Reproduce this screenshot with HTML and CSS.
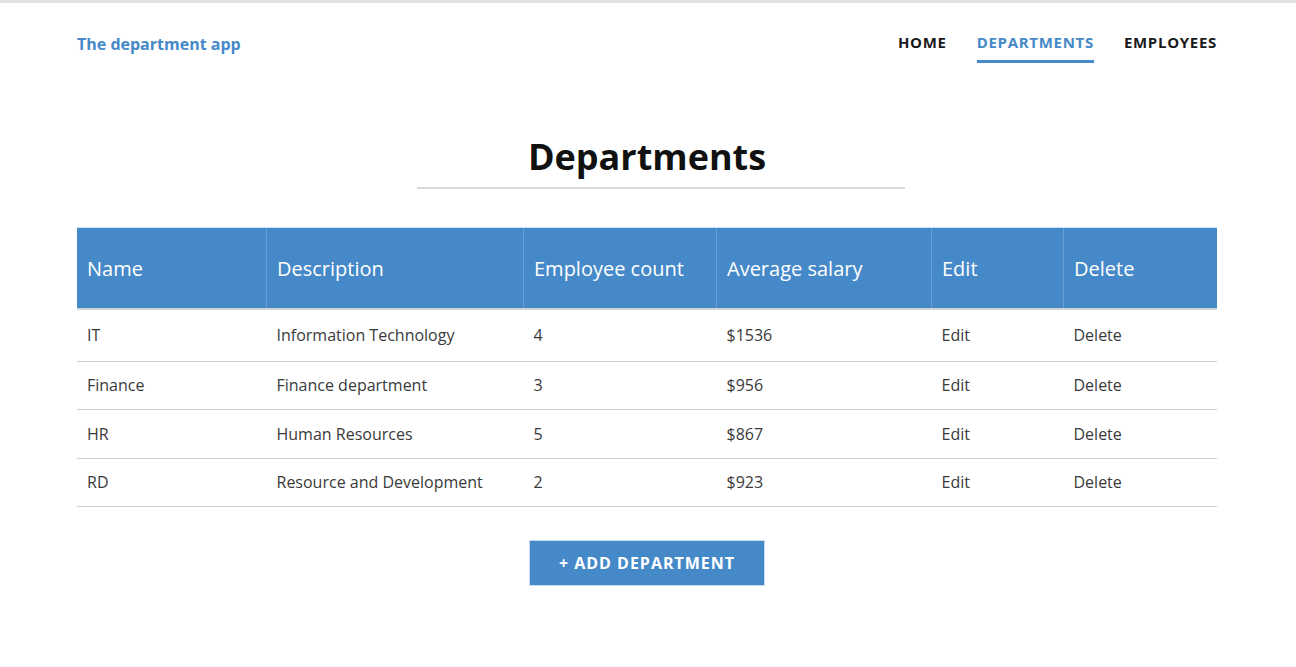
FILE: index.html
```html
<!DOCTYPE html>
<html lang="en">
<head>
<meta charset="utf-8">
<title>The department app</title>
<link rel="stylesheet" href="styles.css">
</head>
<body>
<div class="topbar"></div>
<div class="container">
  <header class="header">
    <a class="brand" href="#">The department app</a>
    <nav class="nav">
      <a class="nav-link" href="#">HOME</a>
      <a class="nav-link active" href="#">DEPARTMENTS</a>
      <a class="nav-link" href="#">EMPLOYEES</a>
    </nav>
  </header>
  <main>
    <h1 class="title">Departments</h1>
    <div class="title-rule"></div>
    <table class="table">
      <thead>
        <tr>
          <th class="c-name">Name</th>
          <th class="c-desc">Description</th>
          <th class="c-count">Employee count</th>
          <th class="c-sal">Average salary</th>
          <th class="c-edit">Edit</th>
          <th class="c-del">Delete</th>
        </tr>
      </thead>
      <tbody>
        <tr class="first"><td>IT</td><td>Information Technology</td><td>4</td><td>$1536</td><td>Edit</td><td>Delete</td></tr>
        <tr class="short"><td>Finance</td><td>Finance department</td><td>3</td><td>$956</td><td>Edit</td><td>Delete</td></tr>
        <tr><td>HR</td><td>Human Resources</td><td>5</td><td>$867</td><td>Edit</td><td>Delete</td></tr>
        <tr class="short"><td>RD</td><td>Resource and Development</td><td>2</td><td>$923</td><td>Edit</td><td>Delete</td></tr>
      </tbody>
    </table>
    <div class="actions">
      <button class="btn">+ ADD DEPARTMENT</button>
    </div>
  </main>
</div>
</body>
</html>
```
FILE: styles.css
```css
html, body {
  margin: 0;
  padding: 0;
  background: #fff;
  font-family: "Open Sans", "Noto Sans", sans-serif;
  color: #333;
}
.topbar {
  height: 3px;
  background: #e2e2e2;
}
.container {
  width: 1140px;
  margin-left: calc(50% - 571px);
}
.header {
  display: flex;
  justify-content: space-between;
  align-items: flex-start;
  height: 60px;
  padding-top: 30px;
}
.brand {
  color: #4689c8;
  font-weight: 700;
  font-size: 16px;
  line-height: 22px;
  text-decoration: none;
}
.nav {
  display: flex;
  gap: 30px;
}
.nav-link {
  color: #1a1a1a;
  font-weight: 700;
  font-size: 15px;
  line-height: 20px;
  letter-spacing: 0.7px;
  text-decoration: none;
  padding-bottom: 8px;
  border-bottom: 3px solid transparent;
  margin-top: -1px;
}
.nav-link.active {
  color: #4689c8;
  border-bottom-color: #4689c8;
}
.title {
  margin: 39px 0 0;
  text-align: center;
  font-size: 36px;
  line-height: 50px;
  font-weight: 700;
  color: #111;
}
.title-rule {
  width: 488px;
  margin: 5px 0 0 340px;
  height: 2px;
  background: #d9d9d9;
}
.table {
  width: 100%;
  margin-top: 38px;
  border-collapse: collapse;
  font-size: 16px;
}
.table th {
  background: #4689c8;
  color: #fff;
  font-weight: 400;
  font-size: 20px;
  text-align: left;
  height: 80px;
  padding: 0 10px;
  border-top: 1px solid #cfe0f0;
  border-left: 1px solid #6a9fd3;
  border-bottom: 2px solid #cfd4d9;
}
.table th:first-child { border-left: none; }
.table td {
  padding: 0 10px;
  height: 48px;
  line-height: 21px;
  color: #3a3a3a;
  border-bottom: 1px solid #cfcfcf;
}
.table tr.first td { height: 51px; }
.table tr.short td { height: 47px; }
.c-name { width: 169px; }
.c-desc { width: 236px; }
.c-count { width: 172px; }
.c-sal { width: 194px; }
.c-edit { width: 111px; }
.actions {
  display: flex;
  justify-content: center;
  margin-top: 33px;
}
.btn {
  width: 236px;
  height: 46px;
  background: #4689c8;
  color: #fff;
  border: 1px solid #c8dcef;
  font-family: "Open Sans", "Noto Sans", sans-serif;
  font-weight: 700;
  font-size: 16px;
  letter-spacing: 1px;
  cursor: pointer;
}
```
